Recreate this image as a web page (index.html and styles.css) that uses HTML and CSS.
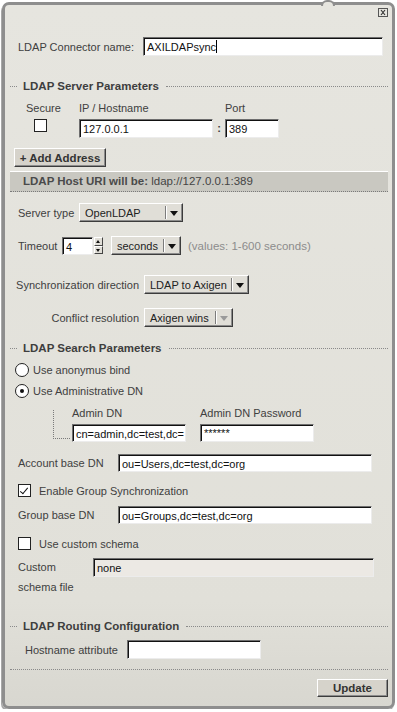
FILE: index.html
```html
<!DOCTYPE html>
<html lang="en">
<head>
    <meta charset="UTF-8">
    <meta name="viewport" content="width=device-width, initial-scale=1.0">
    <title>LDAP Connector</title>
    <link rel="stylesheet" href="styles.css">
</head>
<body>

<div class="panel">
    <div class="notch"></div>

    <div class="top-bar">
        <span class="close-btn">
            <svg width="10" height="9" viewBox="0 0 10 9">
                <rect x="0.5" y="0.5" width="9" height="8" fill="none" stroke="#555"/>
                <path d="M3 2 L7 7 M7 2 L3 7" stroke="#333" stroke-width="1.2"/>
            </svg>
        </span>
    </div>

    <div class="row row-name">
        <label class="lbl name-lbl">LDAP Connector name:</label>
        <div class="field w-name">AXILDAPsync<span class="caret"></span></div>
    </div>

    <div class="section sec-server"><span>LDAP Server Parameters</span></div>

    <div class="row host-labels">
        <span class="col-secure">Secure</span>
        <span class="col-ip">IP / Hostname</span>
        <span>Port</span>
    </div>
    <div class="row host-inputs">
        <span class="col-secure"><span class="check"></span></span>
        <div class="field w-ip">127.0.0.1</div>
        <span class="colon">:</span>
        <div class="field w-port">389</div>
    </div>

    <div class="row row-add">
        <button class="btn btn-add">+ Add Address</button>
    </div>

    <div class="uri-bar"><b>LDAP Host URI will be:</b> ldap://127.0.0.1:389</div>

    <div class="row row-server">
        <label class="lbl">Server type</label>
        <div class="select w-server"><span class="sel-text">OpenLDAP</span><span class="sel-arrow"></span></div>
    </div>

    <div class="row row-timeout">
        <label class="lbl">Timeout</label>
        <div class="field w-spin">4</div>
        <div class="spin"><span class="spin-up"></span><span class="spin-down"></span></div>
        <div class="select w-seconds"><span class="sel-text">seconds</span><span class="sel-arrow"></span></div>
        <span class="hint">(values: 1-600 seconds)</span>
    </div>

    <div class="row row-sync">
        <label class="lbl lbl-right">Synchronization direction</label>
        <div class="select w-sync"><span class="sel-text">LDAP to Axigen</span><span class="sel-arrow"></span></div>
    </div>

    <div class="row row-conflict">
        <label class="lbl lbl-right">Conflict resolution</label>
        <div class="select w-conflict"><span class="sel-text">Axigen wins</span><span class="sel-arrow off"></span></div>
    </div>

    <div class="section sec-search"><span>LDAP Search Parameters</span></div>

    <div class="row row-radio1">
        <span class="radio"></span>
        <span>Use anonymus bind</span>
    </div>
    <div class="row row-radio2">
        <span class="radio on"></span>
        <span>Use Administrative DN</span>
    </div>

    <div class="admin">
        <div class="tree"></div>
        <div class="admin-grid">
            <span>Admin DN</span>
            <span>Admin DN Password</span>
            <div class="field w-admin">cn=admin,dc=test,dc=</div>
            <div class="field w-admin pass">******</div>
        </div>
    </div>

    <div class="row row-account">
        <label class="lbl">Account base DN</label>
        <div class="field w-dn">ou=Users,dc=test,dc=org</div>
    </div>

    <div class="row row-enable">
        <span class="check on"></span>
        <span>Enable Group Synchronization</span>
    </div>

    <div class="row row-group">
        <label class="lbl">Group base DN</label>
        <div class="field w-dn">ou=Groups,dc=test,dc=org</div>
    </div>

    <div class="row row-custom">
        <span class="check"></span>
        <span>Use custom schema</span>
    </div>

    <div class="row row-schema">
        <label class="lbl schema-lbl">Custom<br>schema file</label>
        <div class="field w-schema disabled">none</div>
    </div>

    <div class="section sec-routing"><span>LDAP Routing Configuration</span></div>

    <div class="row row-hostattr">
        <label class="lbl">Hostname attribute</label>
        <div class="field w-hostattr"></div>
    </div>

    <div class="bottom-line"></div>

    <div class="row row-update">
        <button class="btn btn-update">Update</button>
    </div>
</div>

</body>
</html>
```

FILE: styles.css
```css
body {
    margin: 0;
    padding: 0;
    background-color: #ffffff;
    font-family: "Liberation Sans", Arial, sans-serif;
    font-size: 11px;
    color: #404040;
}

.panel {
    position: relative;
    box-sizing: border-box;
    width: 393px;
    height: 707px;
    margin: 2px 0 0 2px;
    border: 3px solid #8e8e8e;
    border-radius: 7px;
    background: linear-gradient(#e6e5df, #e1e0d9 85%, #d8d7d0);
    box-shadow: -1px 2px 0 #a8a8a8;
}

/* the little bump in the top border */
.notch {
    position: absolute;
    top: -5px;
    left: 316px;
    width: 10px;
    height: 4px;
    background-color: #e6e5df;
    border: 2px solid #8e8e8e;
    border-bottom: none;
    border-radius: 6px 6px 0 0;
}

.top-bar {
    display: flex;
    justify-content: flex-end;
    padding: 3px 4px 0 0;
    height: 9px;
}

.close-btn {
    display: block;
    width: 10px;
    height: 9px;
}

.close-btn svg {
    display: block;
}

.row {
    display: flex;
    align-items: center;
    padding-left: 13px;
}

.row > * {
    flex-shrink: 0;
    box-sizing: border-box;
}

.lbl {
    color: #404040;
    white-space: nowrap;
}

.field {
    box-sizing: border-box;
    height: 19px;
    padding: 2px 3px 0 3px;
    background-color: #ffffff;
    border: 1px solid;
    border-color: #6e6e6e #ececec #ececec #6e6e6e;
    box-shadow: inset 1px 1px 0 #111;
    color: #111;
    font-size: 11px;
    line-height: 14px;
    white-space: nowrap;
    overflow: hidden;
}

.field.disabled {
    background-color: #ece9e4;
}

.caret {
    display: inline-block;
    width: 1px;
    height: 13px;
    background-color: #000;
    vertical-align: -2px;
}

/* section headers with dotted rules */
.section {
    display: flex;
    align-items: center;
    height: 14px;
    padding: 0 4px 0 5px;
    font-size: 11.5px;
    font-weight: bold;
    color: #3e3e3e;
}

.section::before {
    content: "";
    width: 7px;
    border-top: 1px dotted #8a8a8a;
    margin-right: 6px;
}

.section::after {
    content: "";
    flex: 1;
    border-top: 1px dotted #8a8a8a;
    margin-left: 7px;
}

/* buttons */
.btn {
    box-sizing: border-box;
    height: 19px;
    padding: 0 4px;
    background-color: #d6d3cb;
    border: 1px solid;
    border-color: #ffffff #3c3c3c #3c3c3c #ffffff;
    box-shadow: inset -1px -1px 0 #8c8c8c;
    font-family: "Liberation Sans", Arial, sans-serif;
    font-size: 11.5px;
    font-weight: bold;
    color: #333;
    cursor: pointer;
}

/* select boxes */
.select {
    box-sizing: border-box;
    display: flex;
    align-items: center;
    height: 19px;
    background-color: #e0ded7;
    border: 1px solid;
    border-color: #ffffff #3c3c3c #3c3c3c #ffffff;
    box-shadow: inset -1px -1px 0 #8c8c8c;
    color: #222;
    font-size: 11px;
}

.sel-text {
    flex: 1;
    padding-left: 5px;
    white-space: nowrap;
    overflow: hidden;
}

.sel-arrow {
    position: relative;
    align-self: stretch;
    flex-shrink: 0;
    width: 16px;
    border-left: 1px solid #7c7c7c;
    box-shadow: inset 1px 0 0 #fff;
    margin: 2px 0;
}

.sel-arrow::after {
    content: "";
    position: absolute;
    left: 4px;
    top: 5px;
    border-left: 4px solid transparent;
    border-right: 4px solid transparent;
    border-top: 5px solid #111;
}

.sel-arrow.off::after {
    border-top-color: #9a9a9a;
}

/* checkboxes and radios */
.check {
    position: relative;
    box-sizing: border-box;
    display: inline-block;
    width: 13px;
    height: 13px;
    background-color: #fff;
    border: 1px solid #222;
}

.check.on::after {
    content: "";
    position: absolute;
    left: 3px;
    top: 1px;
    width: 3px;
    height: 7px;
    border-right: 1px solid #111;
    border-bottom: 1px solid #111;
    transform: rotate(40deg);
}

.radio {
    position: relative;
    box-sizing: border-box;
    display: inline-block;
    width: 14px;
    height: 14px;
    border-radius: 50%;
    background-color: #fff;
    border: 1px solid #222;
}

.radio.on::after {
    content: "";
    position: absolute;
    left: 4px;
    top: 4px;
    width: 4px;
    height: 4px;
    border-radius: 50%;
    background-color: #111;
}

/* connector name */
.row-name {
    margin-top: 20px;
}

.name-lbl {
    width: 125px;
}

.w-name {
    width: 240px;
}

.sec-server {
    margin-top: 23px;
}

/* host rows */
.host-labels {
    margin-top: 8px;
    height: 14px;
    padding-left: 16px;
}

.host-labels .col-secure {
    width: 58px;
    padding-left: 5px;
}

.col-ip {
    width: 146px;
}

.host-inputs {
    margin-top: 4px;
    padding-left: 16px;
    align-items: flex-start;
}

.host-inputs .col-secure {
    width: 58px;
    padding-left: 13px;
}

.w-ip {
    width: 134px;
}

.colon {
    width: 12px;
    text-align: center;
    font-weight: bold;
    line-height: 18px;
}

.w-port {
    width: 54px;
}

.row-add {
    margin-top: 10px;
    padding-left: 9px;
}

.btn-add {
    width: 92px;
}

/* uri bar */
.uri-bar {
    box-sizing: border-box;
    height: 21px;
    margin: 4px 4px 0 5px;
    padding: 3px 0 0 13px;
    background-color: #c9c8c1;
    border-top: 1px solid #ffffff;
    border-bottom: 1px dotted #7a7a7a;
    color: #444;
    font-size: 11.5px;
}

.uri-bar b {
    color: #4a4a4a;
}

/* server options */
.row-server {
    margin-top: 11px;
}

.row-server .lbl {
    width: 61px;
}

.w-server {
    width: 104px;
}

.row-timeout {
    margin-top: 14px;
}

.row-timeout .lbl {
    width: 44px;
}

.w-spin {
    width: 31px;
    height: 18px;
}

.spin {
    display: flex;
    flex-direction: column;
    width: 9px;
    height: 17px;
    margin-left: 1px;
}

.spin-up,
.spin-down {
    position: relative;
    box-sizing: border-box;
    flex: 1;
    background-color: #e0ded7;
    border: 1px solid;
    border-color: #fff #444 #444 #fff;
}

.spin-up::after,
.spin-down::after {
    content: "";
    position: absolute;
    left: 1px;
    top: 2px;
    border-left: 2.5px solid transparent;
    border-right: 2.5px solid transparent;
}

.spin-up::after {
    border-bottom: 3px solid #111;
}

.spin-down::after {
    border-top: 3px solid #111;
}

.w-seconds {
    width: 70px;
    margin-left: 8px;
}

.hint {
    margin-left: 7px;
    color: #8c8c8c;
    font-size: 11.5px;
}

.lbl-right {
    width: 131px;
    text-align: right;
    padding-right: 5px;
}

.row-sync {
    margin-top: 20px;
    padding-left: 8px;
}

.w-sync {
    width: 105px;
}

.row-conflict {
    margin-top: 14px;
    padding-left: 8px;
}

.w-conflict {
    width: 89px;
}

/* search parameters */
.sec-search {
    margin-top: 14px;
}

.row-radio1 {
    margin-top: 8px;
    height: 14px;
    padding-left: 10px;
    gap: 4px;
}

.row-radio2 {
    margin-top: 7px;
    height: 14px;
    padding-left: 10px;
    gap: 4px;
}

.admin {
    display: flex;
    margin-top: 9px;
    padding-left: 48px;
}

.tree {
    width: 16px;
    height: 28px;
    margin-top: 3px;
    border-left: 1px dotted #7a7a7a;
    border-bottom: 1px dotted #7a7a7a;
}

.admin-grid {
    display: grid;
    grid-template-columns: 114px 114px;
    column-gap: 14px;
    row-gap: 5px;
    margin-left: 2px;
}

.w-admin {
    height: 18px;
}

.pass {
    padding-top: 1px;
}

.row-account {
    margin-top: 12px;
}

.row-account .lbl,
.row-group .lbl {
    width: 100px;
}

.w-dn {
    width: 254px;
    height: 18px;
}

.row-enable {
    margin-top: 12px;
    height: 13px;
    gap: 8px;
}

.row-group {
    margin-top: 9px;
}

.row-custom {
    margin-top: 13px;
    height: 13px;
    gap: 8px;
}

.row-schema {
    margin-top: 8px;
    align-items: flex-start;
}

.schema-lbl {
    width: 75px;
    line-height: 20px;
    margin-top: -1px;
}

.w-schema {
    width: 281px;
}

/* routing */
.sec-routing {
    margin-top: 22px;
}

.row-hostattr {
    margin-top: 7px;
    padding-left: 20px;
}

.row-hostattr .lbl {
    width: 102px;
}

.w-hostattr {
    width: 134px;
}

.bottom-line {
    margin: 10px 4px 0 5px;
    border-top: 1px dotted #8a8a8a;
}

.row-update {
    justify-content: flex-end;
    margin-top: 9px;
    padding-right: 4px;
}

.btn-update {
    width: 71px;
    height: 18px;
}
```
